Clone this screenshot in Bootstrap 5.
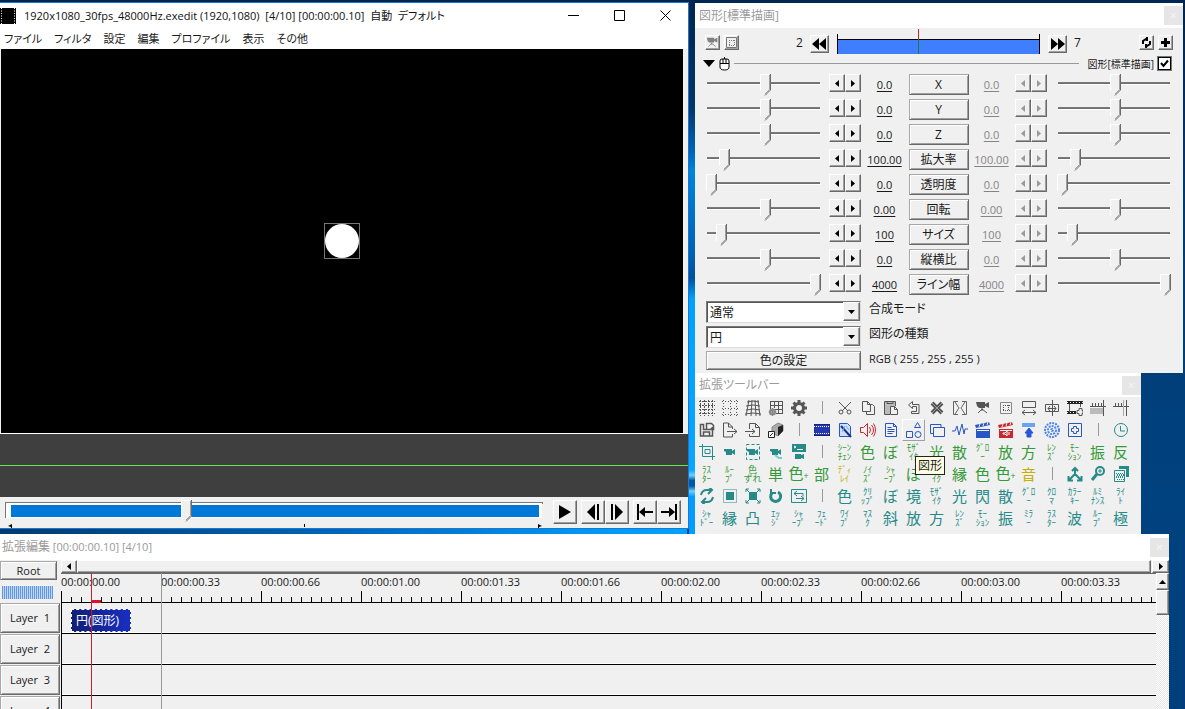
<!DOCTYPE html>
<html lang="ja">
<head>
<meta charset="utf-8">
<meta name="viewport" content="width=device-width, initial-scale=1">
<title>拡張編集</title>
<link href="https://cdn.jsdelivr.net/npm/bootstrap@5.3.0/dist/css/bootstrap.min.css" rel="stylesheet">
<style>
:root{--face:#f0f0f0;--lo:#696969;--mid:#a0a0a0}
body{font-family:"Open Sans","Noto Sans CJK JP",sans-serif;font-size:11px;line-height:16px;color:#1a1a1a;background:#003f7c;font-feature-settings:"palt"}
.jp{font-size:12px}
button,select,input{font:inherit;color:inherit;margin:0}
svg{display:block;flex:none}
a{color:inherit;text-decoration:none}
.desktop{height:100vh;background:linear-gradient(#002550,#003a72 30%,#00427f 70%,#003f7c)}
.upper{padding-top:2px}
.gutter{width:6px;margin-top:-2px;margin-bottom:-5px;background:linear-gradient(#01264f 0,#00366b 20%,#0061b5 28%,#0084dc 32%,#0060b4 48%,#004f9c 52%,#00a2ff 56%,#0aa5ff 88%,#6cd0ff 89%,#0057a5 90%,#0057a5 91%,#6cd0ff 92%,#009cff 93%)}
.strip{height:5px;width:58%;background:linear-gradient(90deg,#003a70,#0066ba 50%,#0096f5 85%,#00a2ff)}
.bevel{background:var(--face);border:1px solid;border-color:#fff var(--lo) var(--lo) #fff;box-shadow:inset -1px -1px var(--mid);padding:0;display:flex;align-items:center;justify-content:center;border-radius:0}
.flatkey{background:var(--face);border:1px solid;border-color:#a8a8a8 var(--lo) var(--lo) #a8a8a8;box-shadow:inset 1px 1px #fff,inset -1px -1px var(--mid);padding:0}
.inactive{background:#fff;color:#9a9a9a;font-size:12px}
.ghost{width:19px;height:19px;background:#e6e6e6;border:0;padding:0;color:#f7f7f7;line-height:17px}

/* player */
.player{border:1px solid #1b78cc;border-left:0;background:var(--face)}
.caption{height:25px;background:#fff;color:#111}
.capbtn{width:46px;height:25px;border:0;background:none;padding:0;display:grid;place-items:center}
.menubar{height:21px;background:#fff;gap:12px;padding-left:4px}
.view{background:#000;margin:0 5px 0 1px;height:384px}
.handle{width:36px;height:36px;border:1px solid #777}
.wave{height:64px;background:#3f3f3f;border-top:1px solid #fff}
.wave hr{margin:31px 0 0;border:0;border-top:1px solid #5fe84f;opacity:1}
.transport{height:31px;padding:3px 7px 0 5px}
.key{width:24px;height:24px}
.seekbox{margin-right:10px}
.seek{appearance:none;-webkit-appearance:none;display:block;width:100%;height:24px;background:linear-gradient(#0078d7,#0078d7) 6px 5px/calc(100% - 10px) 12px no-repeat,linear-gradient(#fff,#fff) 1px 3px/calc(100% - 2px) 15px no-repeat,linear-gradient(#777,#777) 0 2px/100% 2px no-repeat,linear-gradient(#777,#777) 0 2px/2px 16px no-repeat}
.seek::-webkit-slider-runnable-track{height:24px}
.seek::-webkit-slider-thumb,.slide::-webkit-slider-thumb{-webkit-appearance:none;width:11px;height:22px;background:url("data:image/svg+xml,%3Csvg xmlns='http://www.w3.org/2000/svg' width='11' height='22'%3E%3Cpath d='M0 0h11v16l-5 5-6-5z' fill='%23f0f0f0'/%3E%3Cpath d='M.5 17V.5H9' fill='none' stroke='%23fff'/%3E%3Cpath d='M10.500 0V16L5 21.500' fill='none' stroke='%23696969'/%3E%3Cpath d='M9.500 1V15.500L5 20' fill='none' stroke='%23a0a0a0'/%3E%3C/svg%3E") no-repeat;border:0;border-radius:0}
.marks{height:4px;padding:0 1px 0 3px}
.marks i:first-of-type{flex:5}
.marks i:last-of-type{flex:4}

/* settings */
.side{width:41%;min-width:488px;margin:1px 2px -5px 0;position:relative}
.props{background:var(--face);height:370px}
.mini{width:15px;height:15px}
.skip{width:19px;height:18px}
.span{height:20px;margin-top:-1px;position:relative;border:solid #000;border-width:0 1px;background:linear-gradient(transparent 5px,#000 5px,#000 6px,#3f7fff 6px) no-repeat}
.now{position:absolute;top:-5px;bottom:0;width:1px;background:linear-gradient(#d02020 10px,#108040 10px)}
.prop{height:25px;display:grid;grid-template-columns:1fr 8px 32px 48px 60px 46px 32px 10px 1fr;padding:0 12px 0 11px}
.slide{-webkit-appearance:none;appearance:none;width:100%;height:21px;background:linear-gradient(#808080,#696969) 1px 8px/calc(100% - 2px) 2px no-repeat,linear-gradient(#fff,#fff) 1px 10px/calc(100% - 1px) 1px no-repeat}
.slide::-webkit-slider-runnable-track{height:21px}
.step{width:16px;height:18px}
.num{height:21px;text-align:center;text-decoration:underline;text-underline-offset:2px;padding-top:3px}
.off{color:#858585}
.name{height:21px;font-size:12px;line-height:17px}
.tick{appearance:none;width:13px;height:13px;border:1px solid #000;box-shadow:0 0 0 1px #777;background:#fff url("data:image/svg+xml,%3Csvg xmlns='http://www.w3.org/2000/svg' width='11' height='11'%3E%3Cpath d='M2 5l2.500 3L9 2.500' fill='none' stroke='%23000' stroke-width='2'/%3E%3C/svg%3E")}
.pick{appearance:none;width:155px;height:22px;border:1px solid;border-color:#777 #ddd #ddd #777;border-radius:0;padding:0 3px;font-size:12px;line-height:19px;box-shadow:inset 1px 1px #555;background:#fff}
.drop{position:absolute;right:1px;top:1px;width:17px;height:19px;pointer-events:none}

/* tool palette */
.palette{margin-right:42px;background:var(--face)}
.tools{display:grid;grid-template-columns:repeat(19,23px);grid-auto-rows:22px}
.tool{border:0;background:none;padding:0;display:grid;place-items:center;overflow:hidden;color:#555}
.hot{border:1px solid;border-color:#fff var(--mid) var(--mid) #fff}
.kan{font:15px/16px "Noto Sans CJK JP",sans-serif}
.two{font:9px/9px "Noto Sans CJK JP",sans-serif;font-feature-settings:normal;white-space:nowrap}
.sup{font-size:9px}
.green{color:#359a38}.teal{color:#258a88}.gold{color:#c2b000}.blue{color:#2856c4}.red{color:#c8282d}
.tip{position:absolute;left:220px;top:83px;background:#ffffe1;border:1px solid #222;padding:1px 2px;font-size:12px;line-height:15px;color:#222}

/* timeline */
.timeline{margin-right:16px;background:var(--face);min-height:0}
.heads{width:60px}
.root{width:57px;height:19px;margin-top:1px;line-height:15px}
.zoom{height:13px;margin:6px 7px 4px 2px;background:repeating-linear-gradient(90deg,#5f96e6 0 1px,#c4d8f4 1px 2px)}
.lay{height:30px;margin-bottom:1px;width:60px}
.lane{height:31px;border-bottom:1px solid #000;box-shadow:inset 0 -1px #fff}
.area{margin-left:1px}
.hbar{height:13px}
.ruler{height:30px;border-bottom:1px solid #000;border-top:1px solid #696969;background:repeating-linear-gradient(90deg,#000 0 1px,transparent 1px 100px) 0 17px/100% 12px no-repeat,repeating-linear-gradient(90deg,#000 0 1px,transparent 1px 10px) 0 23px/100% 6px no-repeat}
.ruler span{flex:0 0 100px;white-space:nowrap}
.tracks{border-left:1px solid #000}
.mark-end,.playhead,.clip,.cursor{position:absolute}
.mark-end{top:0;bottom:0;width:1px;background:#999}
.playhead{top:0;bottom:0;width:1px;background:#c8202c}
.cursor{top:27px;width:10px;height:3px;background:#e0102c}
.clip{top:36px;height:23px;border:1px dashed #fff;background:linear-gradient(90deg,#101f74,#192fc4) border-box;color:#fff;font-size:12px;line-height:22px;padding-left:4px;white-space:nowrap}
.vbar{width:13px;background:repeating-conic-gradient(#fff 0 25%,#e6e6e6 0 50%) 0 0/2px 2px}
</style>
</head>
<body>
<main class="desktop d-flex flex-column overflow-hidden">
  <div class="upper d-flex">
    <section class="player flex-grow-1" aria-label="プレビュー">
      <header class="caption d-flex align-items-center">
        <svg width="16" height="16" class="ms-0 me-1" viewBox="0 0 16 16"><path d="M0 0h16v16H0z"/><path d="M1.500 0v16M14.500 0v16" stroke="#fff" stroke-dasharray="1 1.500"/></svg>
        <span class="text-nowrap ps-1 ms-n1">1920x1080_30fps_48000Hz.exedit (1920,1080)&nbsp; [4/10] [00:00:00.10]&nbsp; 自動&nbsp; デフォルト</span>
        <div class="ms-auto d-flex">
          <button class="capbtn" aria-label="最小化"><svg width="11" height="11"><path d="M0 5.500h11" stroke="#000"/></svg></button>
          <button class="capbtn" aria-label="最大化"><svg width="11" height="11"><path d="M.5.5h10v10H.5z" fill="none" stroke="#000"/></svg></button>
          <button class="capbtn" aria-label="閉じる"><svg width="11" height="11"><path d="M.5.5l10 10M10.500.5l-10 10" stroke="#000"/></svg></button>
        </div>
      </header>
      <nav class="menubar d-flex align-items-center">
        <a href="#">ファイル</a><a href="#">フィルタ</a><a href="#">設定</a><a href="#">編集</a><a href="#">プロファイル</a><a href="#">表示</a><a href="#">その他</a>
      </nav>
      <div class="view d-flex align-items-center justify-content-center">
        <div class="handle"><svg width="34" height="34"><circle cx="17" cy="17" r="17" fill="#fff"/></svg></div>
      </div>
      <div class="wave"><hr></div>
      <div class="transport d-flex">
        <div class="seekbox flex-grow-1">
          <input class="seek" type="range" min="0" max="9" value="3" aria-label="フレーム">
          <div class="marks d-flex"><svg width="4" height="4"><path d="M4 0v4H3V3L0 2z"/></svg><i></i><svg width="1" height="3"><path d="M0 0h1v3H0z"/></svg><i></i><svg width="4" height="4"><path d="M0 0v4h1V3l3-1z"/></svg></div>
        </div>
        <button class="bevel key me-1" aria-label="再生"><svg width="16" height="16"><path d="M2 1v14l12-7z"/></svg></button>
        <button class="bevel key" aria-label="前フレーム"><svg width="16" height="16"><path d="M10 0v16L2 8zM12 0h2v16h-2z"/></svg></button>
        <button class="bevel key me-1" aria-label="次フレーム"><svg width="16" height="16"><path d="M6 0v16l8-8zM2 0h2v16H2z"/></svg></button>
        <button class="bevel key" aria-label="先頭"><svg width="18" height="16"><path d="M1 0h2v16H1zM3 8l6-5v4h8v2H9v4z"/></svg></button>
        <button class="bevel key" aria-label="末尾"><svg width="18" height="16"><path d="M15 0h2v16h-2zM15 8L9 3v4H1v2h8v4z"/></svg></button>
      </div>
    </section>
    <div class="gutter flex-shrink-0"></div>
    <div class="side flex-shrink-0 d-flex flex-column">
      <section class="props" aria-label="図形[標準描画]">
        <header class="inactive d-flex align-items-center justify-content-between ps-1" style="height:25px"><span>図形[標準描画]</span><button class="ghost" aria-label="閉じる">×</button></header>
        <div class="d-flex align-items-start" style="padding:7px 10px 0;height:25px">
          <button class="bevel mini me-1" aria-label="カメラ制御"><svg width="13" height="13" viewBox="0 0 16 16" fill="#808080" color="#808080"><use href="#camera"/></svg></button>
          <button class="bevel mini" aria-label="クリッピング"><svg width="11" height="11" fill="none" stroke="#777"><path d="M.5.5h10v10H.5z"/><path d="M3 3.500h6M3 8.500h6M3.500 3v6M8.500 3v6" stroke-dasharray="1 1"/></svg></button>
          <span class="jp" style="padding-right:7px;margin-left:57px">2</span>
          <button class="bevel skip" aria-label="前の区間"><svg width="14" height="12"><path d="M7 0v12L0 6zM14 0v12L7 6z"/></svg></button>
          <div class="span flex-grow-1 mx-2"><i class="now" style="left:40%"></i></div>
          <button class="bevel skip" aria-label="次の区間"><svg width="14" height="12"><path d="M0 0v12l7-6zM7 0v12l7-6z"/></svg></button>
          <span class="jp" style="width:72px;padding-left:7px">7</span>
          <button class="bevel mini me-1" aria-label="更新"><svg width="11" height="11" fill="none" stroke="#000" stroke-width="2"><path d="M2 7V4l3-2h2M9 4v3L6 9H4M6 0v4M5 7v4"/></svg></button>
          <button class="bevel mini" aria-label="追加"><svg width="11" height="11"><path d="M4 1h3v3h3v3H7v3H4V7H1V4h3z"/></svg></button>
        </div>
        <div class="d-flex align-items-center" style="height:21px;padding-left:8px;padding-right:12px">
          <svg width="12" height="7" class="me-1"><path d="M0 0h12L6 7z"/></svg>
          <svg width="11" height="14" class="me-1" fill="#fff" stroke="#000"><path d="M1 4q0-2 2-2h5q2 0 2 2v6q0 3-4.500 3T1 10zM1 6.500h9M4 2v4M7 2v4M5.500 0v2"/></svg>
          <div class="flex-grow-1 me-2" style="border-top:1px solid #999"></div>
          <label for="on" class="text-nowrap me-1" style="font-size:10px">図形[標準描画]</label>
          <input id="on" class="tick" type="checkbox" checked>
        </div>
        <div id="props"></div>
        <div class="d-flex flex-column" style="padding-left:11px;gap:3px;padding-top:2px">
          <div class="d-flex"><div class="position-relative"><select class="pick" id="blend"><option>通常</option></select><span class="bevel drop"><svg width="7" height="4"><path d="M0 0h7L3.500 4z"/></svg></span></div><label class="jp ms-2" for="blend">合成モード</label></div>
          <div class="d-flex"><div class="position-relative"><select class="pick" id="shape"><option>円</option></select><span class="bevel drop"><svg width="7" height="4"><path d="M0 0h7L3.500 4z"/></svg></span></div><label class="jp ms-2" for="shape">図形の種類</label></div>
          <div class="d-flex"><button class="flatkey jp" style="width:155px;height:19px;line-height:14px">色の設定</button><span class="ms-2">RGB ( 255 , 255 , 255 )</span></div>
        </div>
      </section>
      <section class="palette flex-grow-1 position-relative" aria-label="拡張ツールバー">
        <header class="inactive d-flex align-items-center justify-content-between ps-1" style="height:24px"><span>拡張ツールバー</span><button class="ghost" aria-label="閉じる">×</button></header>
        <div class="tools" id="tools"></div>
        <div class="tip" role="tooltip">図形</div>
      </section>
    </div>
  </div>
  <div class="strip flex-shrink-0"></div>
  <section class="timeline flex-grow-1 d-flex flex-column overflow-hidden" aria-label="拡張編集">
    <header class="inactive d-flex flex-shrink-0 align-items-center justify-content-between" style="height:26px;padding-left:2px"><span style="font-size:11px"><span class="jp">拡張編集</span> [00:00:00.10] [4/10]</span><button class="ghost" aria-label="閉じる">×</button></header>
    <div class="d-flex flex-grow-1 overflow-hidden">
      <div class="heads flex-shrink-0">
        <button class="flatkey root d-block">Root</button>
        <div class="zoom"></div>
        <div id="heads"></div>
      </div>
      <div class="area flex-grow-1 overflow-hidden">
        <div class="hbar d-flex"><button class="bevel" style="width:16px" aria-label="左"><svg width="4" height="7"><path d="M4 0v7L0 3.500z"/></svg></button><div class="bevel flex-grow-1"></div><button class="bevel" style="width:17px;margin-left:1px" aria-label="右"><svg width="4" height="7"><path d="M0 0v7l4-3.500z"/></svg></button></div>
        <div class="d-flex">
          <div class="flex-grow-1 position-relative overflow-hidden">
            <div class="ruler d-flex overflow-hidden" id="ruler"></div>
            <div class="tracks" id="lanes"></div>
            <i class="mark-end" id="end"></i>
            <div class="clip" id="clip">円(図形)</div>
            <i class="cursor" id="cursor"></i>
            <i class="playhead" id="head"></i>
          </div>
          <div class="vbar flex-shrink-0"><button class="bevel w-100" style="height:17px" aria-label="上"><svg width="7" height="4"><path d="M0 4h7L3.500 0z"/></svg></button><div class="bevel" style="height:25px"></div></div>
        </div>
      </div>
    </div>
  </section>
</main>

<svg width="0" height="0" class="position-absolute" aria-hidden="true">
  <symbol id="camera" viewBox="0 0 16 16"><path d="M1 2h9v2l4-2v6l-4-2v2H4L2 6z" stroke="none" fill="currentColor"/><path d="M7 8v3M7 9l-4 4M7 9l5 4" fill="none" stroke="currentColor"/></symbol>
</svg>

<script>
const props = [['X','0.0',52],['Y','0.0',52],['Z','0.0',52],['拡大率','100.00',13],['透明度','0.0',0],['回転','0.00',52],['サイズ','100',10],['縦横比','0.0',52],['ライン幅','4000',100]];
const arrows = (off, n) => {
  const c = off ? '#999' : '#000', d = off ? 'disabled' : '';
  return `<div class="d-flex"><button class="bevel step" ${d} aria-label="${n} 減"><svg width="4" height="7"><path fill="${c}" d="M4 0v7L0 3.500z"/></svg></button><button class="bevel step" ${d} aria-label="${n} 増"><svg width="4" height="7"><path fill="${c}" d="M0 0v7l4-3.500z"/></svg></button></div>`;
};
document.getElementById('props').innerHTML = props.map(([n, v, p]) =>
  `<div class="prop"><input class="slide" type="range" value="${p}" aria-label="${n} 始点"><i></i>${arrows(false, n)}<a class="num" href="#">${v}</a><button class="flatkey name">${n}</button><span class="num off">${v}</span>${arrows(true, n)}<i></i><input class="slide" type="range" value="${p}" disabled aria-label="${n} 終点"></div>`).join('');

// Icon bodies on a 16 x 16 box; strokes inherit the tool colour.
const F = 'fill="currentColor" stroke="none"';
const cam = `<path ${F} d="M2 5h8v2l3-2v6l-3-2v2H4V8L2 7z"/>`;
const clap = `<path ${F} d="M1 7h14v9H1zM0 3l14-3 1 3L1 6z"/><path stroke="#f0f0f0" d="M4 5l1-3M8 4l1-3M12 3l1-3M2 8.500h12"/>`;
const icons = {
  grid: '<path d="M1.500 0v16M5.500 0v16M9.500 0v16M13.500 0v16M0 1.500h16M0 5.500h16M0 9.500h16M0 13.500h16" stroke-dasharray="2 1"/>',
  dots: '<path d="M0 1.500h16M0 8.500h16M0 14.500h16M1.500 0v16M8.500 0v16M14.500 0v16" stroke-dasharray="1 2"/>',
  warp: '<path d="M4 0L1 16M7 0L6 16M10 0l1 16M13 0l2 16M2 2q6-2 12 0M1 6q7-2 14 0M1 10q7-2 14 0M0 14q8-2 16 0"/>',
  ggear: '<path d="M2 1.500h13M2 5.500h13M6 9.500h9M8 13.500h7M2.500 1v8M6.500 1v7M10.500 1v13M14.500 1v13"/><circle cx="4.500" cy="12" r="2.500" stroke-width="2" stroke="#888"/><path stroke="#888" d="M4.500 8v8M.5 12h8M2 9.500l5 5M7 9.500l-5 5"/>',
  gear: '<circle cx="8" cy="8" r="4.500" stroke-width="3"/><path stroke-width="3" d="M8 0v3M8 13v3M0 8h3M13 8h3M2.500 2.500l2 2M11.500 11.500l2 2M13.500 2.500l-2 2M4.500 11.500l-2 2"/>',
  bar: '<path d="M8.500 1v13" stroke="#999"/>',
  cut: '<path d="M2 2l9 9M14 2l-9 9"/><circle cx="4" cy="12" r="2"/><circle cx="12" cy="12" r="2"/>',
  copy: '<path d="M2.500 1.500h5l3 3v7h-8zM7.500 1.500v3h3M6.500 11.500v3h8v-8l-2-2h-2"/>',
  paste: '<path d="M7 14.500H1.500v-13h11V6M4 1.500h6v2H4z" fill="#bbb"/><path fill="#f0f0f0" d="M7.500 6.500h4l3 3v5h-7zM11.500 6.500v3h3"/>',
  undo: '<path d="M6.500 1.500l-4 3.500 4 3.500v-2h4v5h-5v2h7.500v-9H6.500z"/>',
  del: '<path d="M3 3l10 10M13 3L3 13" stroke-width="4"/><path d="M3 3l10 10M13 3L3 13" stroke="#999"/>',
  split: '<path d="M6 1.500H1.500v13H6M10 1.500h4.500v13H10M3 2l4 6-4 6M13 2L9 8l4 6" stroke="#666"/>',
  camera: '<use href="#camera"/>',
  dsq: '<path d="M2.500 2.500h11v11h-11z" stroke="#888"/><path d="M5 5.500h7M5 10.500h7M5.500 5v6M10.500 5v6" stroke-dasharray="1 1"/>',
  width: '<path d="M1.500 1.500h13v6h-13zM1 12.500h14M4 10l-3 2.500L4 15M12 10l3 2.500L12 15"/>',
  center: '<path d="M1.500 4.500h13v7h-13zM8.500 0v16M4 8.500h8M6 6L4 8.500 6 11M10 6l2 2.500-2 2.500"/>',
  film2: '<path d="M0 2.500h16M0 12.500h9" stroke-width="3" stroke="#222"/><path d="M0 2.500h16M0 12.500h9" stroke="#eee" stroke-dasharray="1 2"/><path d="M2.500 4v8M13.500 4v3"/><path d="M10 10.500h2v-2h3v2h1v3h-1v2h-3v-2h-2z"/>',
  rul: '<path d="M0 6.500h16M13.500 0v16M2.500 3v3M5.500 3v3M8.500 3v3M11.500 3v3"/><path d="M0 8h13v6H0z" fill="#bbb" stroke="none"/>',
  rul2: '<path d="M0 6.500h16M13.500 0v16M2.500 3v3M5.500 3v3M8.500 3v3"/><path stroke="#aaa" d="M10.500 0v16"/>',
  save: '<path d="M1.500 2.500h3v5h7l2-2V14H1.500zM7.500 1.500h5l2 2v4h-7zM4.500 14v-4h6v4" stroke-width="1.500"/>',
  exp: '<path d="M10.500 7V5l-4-4h-5v14h9v-3M6.500 1v4h4M5 9.500h10M12 7l3 2.500-3 2.500"/>',
  imp: '<path d="M4.500 7V1.500h6l4 4v9h-10V12M10.500 1.500v4h4M0 9.500h10M7 7l3 2.500L7 12"/>',
  plug: '<path d="M4 5l6-4 5 2v6l-5 5-6-3z" fill="#aaa" stroke="#888"/><path d="M10 5l5-2v6l-5 5z" fill="#222" stroke="none"/><path fill="#fff" stroke="#222" d="M.5 9.500h6v6h-6zM2 14l3-3"/>',
  film: '<path fill="#2438b0" stroke="#17237a" d="M0 2.500h16v11H0z"/><path stroke="#fff" d="M0 4.500h16M0 11.500h16" stroke-dasharray="1 1"/>',
  script: '<path d="M2.500 1.500h8l3 3v10h-11z" fill="#cfe0fa"/><path stroke-width="2" stroke="#17358c" d="M4 4l10 11"/><path stroke="#7eaaf0" d="M5 10l3-6M9 4l3 4"/>',
  spk: '<path d="M.5 5.500h3l4-4v13l-4-4h-3zM9.500 5q2 3 0 6M11.500 3q4 5 0 10M13.500 1.500q4 6.500 0 13"/>',
  doc: '<path d="M2.500 1.500h8l3 3v10h-11zM10.500 1.500v3h3M4.500 5.500h4M4.500 7.500h7M4.500 9.500h7M4.500 11.500h5"/>',
  shape: '<path d="M.5 9.500h6v6h-6zM11.500.5l3 5h-6z"/><circle cx="12" cy="12.500" r="3"/>',
  layers: '<path d="M4.500 5.500h11v9h-11zM12 5V2.500H1.500v9H4"/>',
  sine: '<path d="M0 9h3l2-5 2 9 3-11 2 10 1-5h3"/>',
  clap, clapr: clap + '<path stroke="#fff" d="M5 11h2l2-2v5l-2-2H5zM11 10v3"/>',
  up: '<path fill="#6aa2f4" stroke="none" d="M1 1h13v4H1z"/><path d="M8 6l4 5h-2v4H6v-4H4z" fill="#2856e4"/>',
  sphere: '<g stroke-dasharray="2 1" stroke="#4f86ec" stroke-width="2"><circle cx="8" cy="8" r="7"/><circle cx="8" cy="8" r="4"/><circle cx="8" cy="8" r="1"/></g>',
  plus: '<path d="M1.500 1.500h13v13h-13zM6.500 4.500h3v2h2v3h-2v2h-3v-2h-2v-3h2z"/>',
  clock: '<circle cx="8" cy="8" r="6.500"/><path d="M7.500 4v5H12"/>',
  crop: '<path d="M3.500 0v12.500H16M0 2.500h13.500V16M6 5.500h5v4H6z"/>',
  cam, camd: cam + '<path stroke-dasharray="3 2" d="M1.500.5h13v15h-13z"/>',
  camp: cam + '<path stroke="#7cc" stroke-width="2" d="M7 11l4 3h3"/>',
  camt: `<path ${F} d="M1 0h14v8H1zM4 10h6v1l3-1v5l-3-1v1H4z"/><path stroke="#fff" d="M3 2l2 1-2 1M6 5.500h6"/>`,
  merge: '<path stroke-width="2" d="M8 2v6l-6 6M8 8l6 6M5 5l3-3 3 3M1.500 10v4.500H6M14.500 10v4.500H10"/>',
  find: '<circle cx="10" cy="5" r="4" stroke-width="2"/><path stroke-width="3" d="M7 8l-5 6"/><path d="M10 3v4M8 5h4"/>',
  stack: `<path ${F} d="M6 0h10v11h-3V3H6z"/><path d="M1.500 4.500h10v11h-10z"/><path stroke-dasharray="1 1" d="M3 7.500h7M4 9.500h7M3 11.500h7M4 13.500h7M4 8.500h7M3 10.500h8"/>`,
  ref: '<path stroke-width="2" d="M2 7q1-5 6-5h4M14 9q-1 5-6 5H4"/><path stroke-width="2" d="M10-1l3 3-4 4M6 17l-3-3 4-4"/>',
  fsq: `<path stroke-dasharray="1 1" d="M1.500 1.500h13v13h-13z"/><path ${F} d="M4 4h8v8H4z"/>`,
  expand: `<path ${F} d="M4 4h8v8H4z"/><path d="M1 4V1h3M12 1h3v3M15 12v3h-3M4 15H1v-3M1 1l3 3M15 1l-3 3M15 15l-3-3M1 15l3-3"/>`,
  reset: '<path stroke-width="3" d="M4 5a5 5 0 1 0 6-1"/><path stroke-width="2" d="M3 1v4h5"/>',
  swap: '<path d="M.5 1.500h15v13H.5zM3 5.500h9v3M6 3L3 5.500 6 8M13 10.500H5M10 8l3 2.500-3 2.500"/>'
};
const rows = [
  '@grid @dots @warp @ggear @gear @bar @cut @copy @paste @undo @del @split @camera @dsq @width @center @film2 @rul @rul2',
  '@save @exp @imp @plug @bar blue@film blue@script red@spk blue@doc blue@shape blue@layers blue@sine blue@clap red@clapr blue@up blue@sphere blue@plus @bar teal@clock',
  'teal@crop teal@cam teal@camd teal@camp teal@camt @bar ｼｰﾝ/ﾁｪﾝ 色 ぼ ﾓｻﾞ/ｲｸ 光 散 ｸﾞﾛ/ｰ 放 方 ﾚﾝ/ｽﾞ ﾓｰ/ｼｮﾝ 振 反',
  'ﾗｽ/ﾀｰ ﾙｰ/ﾌﾟ 色/ずれ 単 色+ 部 gold:ﾃﾞｨ/ﾚｲ ﾉｲ/ｽﾞ ｼｬ/ｰﾌﾟ ぼ ﾓｻﾞ/ｲｸ 縁 色 色+ gold:音 @bar teal@merge teal@find teal@stack',
  'teal@ref teal@fsq teal@expand teal@reset teal@swap @bar 色 ｸﾘ/ｯﾌﾟ ぼ 境 ﾓｻﾞ/ｲｸ 光 閃 散 ｸﾞﾛ/ｰ ｸﾛ/ﾏ ｶﾗｰ/ｷｰ ﾙﾐ/ﾅﾝｽ ﾗｲ/ﾄ',
  'ｼｬ/ﾄﾞｰ 縁 凸 ｴｯ/ｼﾞ ｼｬ/ｰﾌﾟ ﾌｪ/ｰﾄﾞ ﾜｲ/ﾌﾟ ﾏｽ/ｸ 斜 放 方 ﾚﾝ/ｽﾞ ﾓｰ/ｼｮﾝ 振 ﾐﾗ/ｰ ﾗｽ/ﾀｰ 波 ﾙｰ/ﾌﾟ 極'
];
document.getElementById('tools').innerHTML = rows.map((r, y) => r.split(' ').map(t => {
  if (t.includes('@')) {
    const [c, k] = t.split('@');
    const s = `<svg width="16" height="16" viewBox="0 0 16 16" fill="none" stroke="currentColor">${icons[k]}</svg>`;
    return k === 'bar' ? `<span class="tool">${s}</span>` : `<button class="tool ${c} ${k === 'shape' ? 'hot' : ''}" aria-label="${k}">${s}</button>`;
  }
  const [a, b] = t.includes(':') ? t.split(':') : [y > 3 ? 'teal' : 'green', t];
  return `<button class="tool ${a}"><span class="${b.length > 2 ? 'two' : 'kan'}">${b.replace('/', '<br>').replace('+', '<span class="sup">+</span>')}</span></button>`;
}).join('')).join('');

// Timeline: ten frames per major mark, ten pixels per frame.
const px = 10, at = (id, f) => document.getElementById(id).style.left = f * px + 'px';
document.getElementById('ruler').innerHTML = ['00.00','00.33','00.66','01.00','01.33','01.66','02.00','02.33','02.66','03.00','03.33'].map(s => `<span>00:00:${s}</span>`).join('');
document.getElementById('heads').innerHTML = [1,2,3,4].map(n => `<button class="flatkey lay d-block">Layer&nbsp; ${n}</button>`).join('');
document.getElementById('lanes').innerHTML = '<div class="lane"></div>'.repeat(4);
at('end', 10); at('head', 3); at('cursor', 3); at('clip', 1);
document.getElementById('clip').style.width = 6 * px + 'px';
</script>
<script src="https://cdn.jsdelivr.net/npm/bootstrap@5.3.0/dist/js/bootstrap.bundle.min.js"></script>
</body>
</html>
